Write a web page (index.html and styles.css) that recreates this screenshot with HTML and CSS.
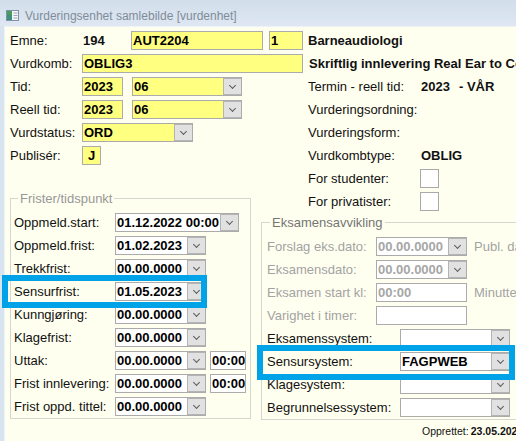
FILE: index.html
```html
<!DOCTYPE html>
<html lang="no">
<head>
  <meta charset="UTF-8">
  <title>Vurderingsenhet samlebilde</title>
  <link rel="stylesheet" href="styles.css">
</head>
<body>
  <div class="window">
    <div class="titlebar">
      <svg class="app-icon" width="13" height="11" viewBox="0 0 13 11">
        <rect x="0.5" y="0.5" width="12" height="10" fill="#f4f6f8" stroke="#7d93ad"/>
        <rect x="1" y="1" width="5" height="9" fill="#3f8f7a"/>
        <rect x="1" y="1" width="5" height="4" fill="#4c9a5c"/>
        <line x1="7.5" y1="3" x2="11.5" y2="3" stroke="#9aa6b3"/>
        <line x1="7.5" y1="5.5" x2="11.5" y2="5.5" stroke="#9aa6b3"/>
        <line x1="7.5" y1="8" x2="11.5" y2="8" stroke="#9aa6b3"/>
      </svg>
      <span>Vurderingsenhet samlebilde [vurdenhet]</span>
    </div>

    <div class="client">
      <div class="row">
        <span class="lbl lbl-main">Emne:</span>
        <span class="val emnenr">194</span>
        <div class="field yellow w-emnekode">AUT2204</div>
        <div class="field yellow w-versjon">1</div>
        <span class="val name">Barneaudiologi</span>
      </div>
      <div class="row">
        <span class="lbl lbl-main">Vurdkomb:</span>
        <div class="field yellow w-vurdkomb">OBLIG3</div>
        <span class="val name name-wide">Skriftlig innlevering Real Ear to Coupler</span>
      </div>

      <div class="split">
        <div class="left">
          <div class="row">
            <span class="lbl lbl-main">Tid:</span>
            <div class="field yellow w-year">2023</div>
            <div class="combo yellow w-month"><span class="txt">06</span><span class="btn"></span></div>
          </div>
          <div class="row">
            <span class="lbl lbl-main">Reell tid:</span>
            <div class="field yellow w-year">2023</div>
            <div class="combo yellow w-month"><span class="txt">06</span><span class="btn"></span></div>
          </div>
          <div class="row">
            <span class="lbl lbl-main">Vurdstatus:</span>
            <div class="combo yellow w-status"><span class="txt">ORD</span><span class="btn"></span></div>
          </div>
          <div class="row">
            <span class="lbl lbl-main">Publisér:</span>
            <div class="field yellow w-flag">J</div>
          </div>

          <fieldset class="group frister">
            <legend>Frister/tidspunkt</legend>
            <div class="row">
              <span class="lbl">Oppmeld.start:</span>
              <div class="combo w-datetime"><span class="txt">01.12.2022 00:00</span><span class="btn"></span></div>
            </div>
            <div class="row">
              <span class="lbl">Oppmeld.frist:</span>
              <div class="combo w-date"><span class="txt">01.02.2023</span><span class="btn"></span></div>
            </div>
            <div class="row">
              <span class="lbl">Trekkfrist:</span>
              <div class="combo w-date"><span class="txt">00.00.0000</span><span class="btn"></span></div>
            </div>
            <div class="row marked">
              <span class="lbl">Sensurfrist:</span>
              <div class="combo w-date"><span class="txt">01.05.2023</span><span class="btn"></span></div>
              <div class="mark mark-sensurfrist"></div>
            </div>
            <div class="row">
              <span class="lbl">Kunngjøring:</span>
              <div class="combo w-date"><span class="txt">00.00.0000</span><span class="btn"></span></div>
            </div>
            <div class="row">
              <span class="lbl">Klagefrist:</span>
              <div class="combo w-date"><span class="txt">00.00.0000</span><span class="btn"></span></div>
            </div>
            <div class="row">
              <span class="lbl">Uttak:</span>
              <div class="combo w-date"><span class="txt">00.00.0000</span><span class="btn"></span></div>
              <div class="field w-time">00:00</div>
            </div>
            <div class="row">
              <span class="lbl">Frist innlevering:</span>
              <div class="combo w-date"><span class="txt">00.00.0000</span><span class="btn"></span></div>
              <div class="field w-time">00:00</div>
            </div>
            <div class="row">
              <span class="lbl">Frist oppd. tittel:</span>
              <div class="combo w-date"><span class="txt">00.00.0000</span><span class="btn"></span></div>
            </div>
          </fieldset>
        </div>

        <div class="right">
          <div class="info">
            <div class="row">
              <span class="lbl">Termin - reell tid:</span>
              <span class="val year">2023</span>
              <span class="val">- VÅR</span>
            </div>
            <div class="row"><span class="lbl">Vurderingsordning:</span></div>
            <div class="row"><span class="lbl">Vurderingsform:</span></div>
            <div class="row">
              <span class="lbl">Vurdkombtype:</span>
              <span class="val">OBLIG</span>
            </div>
            <div class="row">
              <span class="lbl">For studenter:</span>
              <span class="check"></span>
            </div>
            <div class="row">
              <span class="lbl">For privatister:</span>
              <span class="check"></span>
            </div>
          </div>

          <fieldset class="group eksamen">
            <legend>Eksamensavvikling</legend>
            <div class="row off">
              <span class="lbl">Forslag eks.dato:</span>
              <div class="combo w-date"><span class="txt">00.00.0000</span><span class="btn"></span></div>
              <span class="after">Publ. dato:</span>
            </div>
            <div class="row off">
              <span class="lbl">Eksamensdato:</span>
              <div class="combo w-date"><span class="txt">00.00.0000</span><span class="btn"></span></div>
            </div>
            <div class="row off">
              <span class="lbl">Eksamen start kl:</span>
              <div class="field w-date">00:00</div>
              <span class="after">Minutter:</span>
            </div>
            <div class="row off">
              <span class="lbl">Varighet i timer:</span>
              <div class="field w-date"></div>
            </div>
            <div class="row sys">
              <span class="lbl">Eksamenssystem:</span>
              <div class="combo w-system"><span class="txt"></span><span class="btn"></span></div>
            </div>
            <div class="row sys marked">
              <span class="lbl">Sensursystem:</span>
              <div class="combo w-system"><span class="txt">FAGPWEB</span><span class="btn"></span></div>
              <div class="mark mark-sensursystem"></div>
            </div>
            <div class="row sys">
              <span class="lbl">Klagesystem:</span>
              <div class="combo w-system"><span class="txt"></span><span class="btn"></span></div>
            </div>
            <div class="row sys">
              <span class="lbl">Begrunnelsessystem:</span>
              <div class="combo w-system"><span class="txt"></span><span class="btn"></span></div>
            </div>
          </fieldset>
        </div>
      </div>

      <div class="footer">
        <span>Opprettet:</span>
        <span class="val">23.05.2023</span>
      </div>
    </div>
  </div>
</body>
</html>
```

FILE: styles.css
```css
* {
  box-sizing: border-box;
}
body {
  margin: 0;
  background: #d9e4f1;
  font-family: 'Liberation Sans', Arial, sans-serif;
  font-size: 13px;
  color: #111;
  overflow: hidden;
}
.window {
  width: 516px;
  height: 441px;
  display: flex;
  flex-direction: column;
  overflow: hidden;
}
.titlebar {
  height: 26px;
  padding: 5px 0 0 6px;
  display: flex;
  align-items: center;
  gap: 6px;
  font-size: 12px;
  color: #808c99;
  background: linear-gradient(#d2deeb, #dee7f2);
  white-space: nowrap;
}
.app-icon {
  flex: none;
}
.client {
  flex: 1;
  margin-left: 4px;
  border-left: 1px solid #eef3f9;
  border-top: 1px solid #eef3f9;
  background: #fffff0;
  padding: 2px 0 0 5px;
}

/* rows */
.row {
  display: flex;
  align-items: center;
  height: 23px;
  white-space: nowrap;
}
.marked {
  position: relative;
}
.lbl {
  flex: none;
}
.lbl-main {
  width: 72px;
}
.val {
  font-weight: bold;
}
.emnenr {
  width: 48px;
  margin-left: 1px;
}
.name {
  margin-left: 5px;
}
.name-wide {
  margin-left: 6px;
}

/* inputs */
.field,
.combo {
  flex: none;
  height: 19px;
  display: flex;
  align-items: center;
  border: 1px solid #ababab;
  background: #fff;
  font-weight: bold;
  color: #000;
  overflow: hidden;
}
.field {
  padding-left: 1px;
}
.yellow {
  background: #ffff80;
}
.combo .txt {
  flex: 1;
  padding-left: 1px;
}
.combo .btn {
  flex: none;
  width: 18px;
  height: 17px;
  display: flex;
  align-items: center;
  justify-content: center;
  background: #e1e1e1;
  border: 1px solid #b4b4b4;
  border-right: 0;
}
.combo .btn::after {
  content: '';
  width: 4px;
  height: 4px;
  margin-top: -3px;
  border-right: 1px solid #5a5a5a;
  border-bottom: 1px solid #5a5a5a;
  transform: rotate(45deg);
}
.w-emnekode { width: 132px; }
.w-versjon { width: 34px; margin-left: 6px; }
.w-vurdkomb { width: 221px; }
.w-year { width: 41px; }
.w-month { width: 110px; margin-left: 9px; }
.w-status { width: 111px; }
.w-flag { width: 19px; justify-content: center; padding-left: 0; }
.w-datetime { width: 124px; }
.w-date { width: 91px; }
.w-time { width: 36px; margin-left: 4px; }
.w-system { width: 110px; }

/* group boxes */
.group {
  margin: 0;
  min-width: 0;
  border: 1px solid #d6d6d0;
  padding: 5px 0 0 3px;
}
.group legend {
  padding: 0 2px;
  margin-left: 4px;
  line-height: 15px;
  color: #979797;
}
.split {
  display: flex;
}
.left {
  flex: none;
  width: 248px;
}
.frister {
  width: 241px;
  margin-top: 24px;
}
.frister .lbl {
  width: 101px;
}
.right {
  flex: none;
  width: 300px;
}
.info {
  padding-left: 50px;
}
.info .lbl {
  width: 113px;
}
.year {
  width: 38px;
}
.check {
  width: 19px;
  height: 19px;
  margin-left: -1px;
  border: 1px solid #a9a9a9;
  background: #fff;
}
.eksamen {
  width: 300px;
  margin: 2px 0 0 3px;
  padding-left: 5px;
}
.eksamen legend {
  margin-left: 3px;
  color: #757575;
}
.eksamen .lbl {
  width: 109px;
}
.eksamen .sys .lbl {
  width: 133px;
}
.off .lbl,
.off .after {
  color: #a3a3a3;
}
.off .field,
.off .combo {
  color: #a6a6a6;
}
.after {
  margin-left: 7px;
}

/* blue annotation frames */
.mark {
  position: absolute;
  border: 6px solid #00a2e8;
  pointer-events: none;
}
.mark-sensurfrist {
  left: -12px;
  top: -5px;
  width: 205px;
  height: 33px;
}
.mark-sensursystem {
  left: -10px;
  top: -5px;
  width: 258px;
  height: 35px;
}

.footer {
  display: flex;
  gap: 2px;
  margin-top: 4px;
  padding-left: 412px;
  height: 14px;
  line-height: 14px;
  font-size: 10.5px;
  white-space: nowrap;
}
```
